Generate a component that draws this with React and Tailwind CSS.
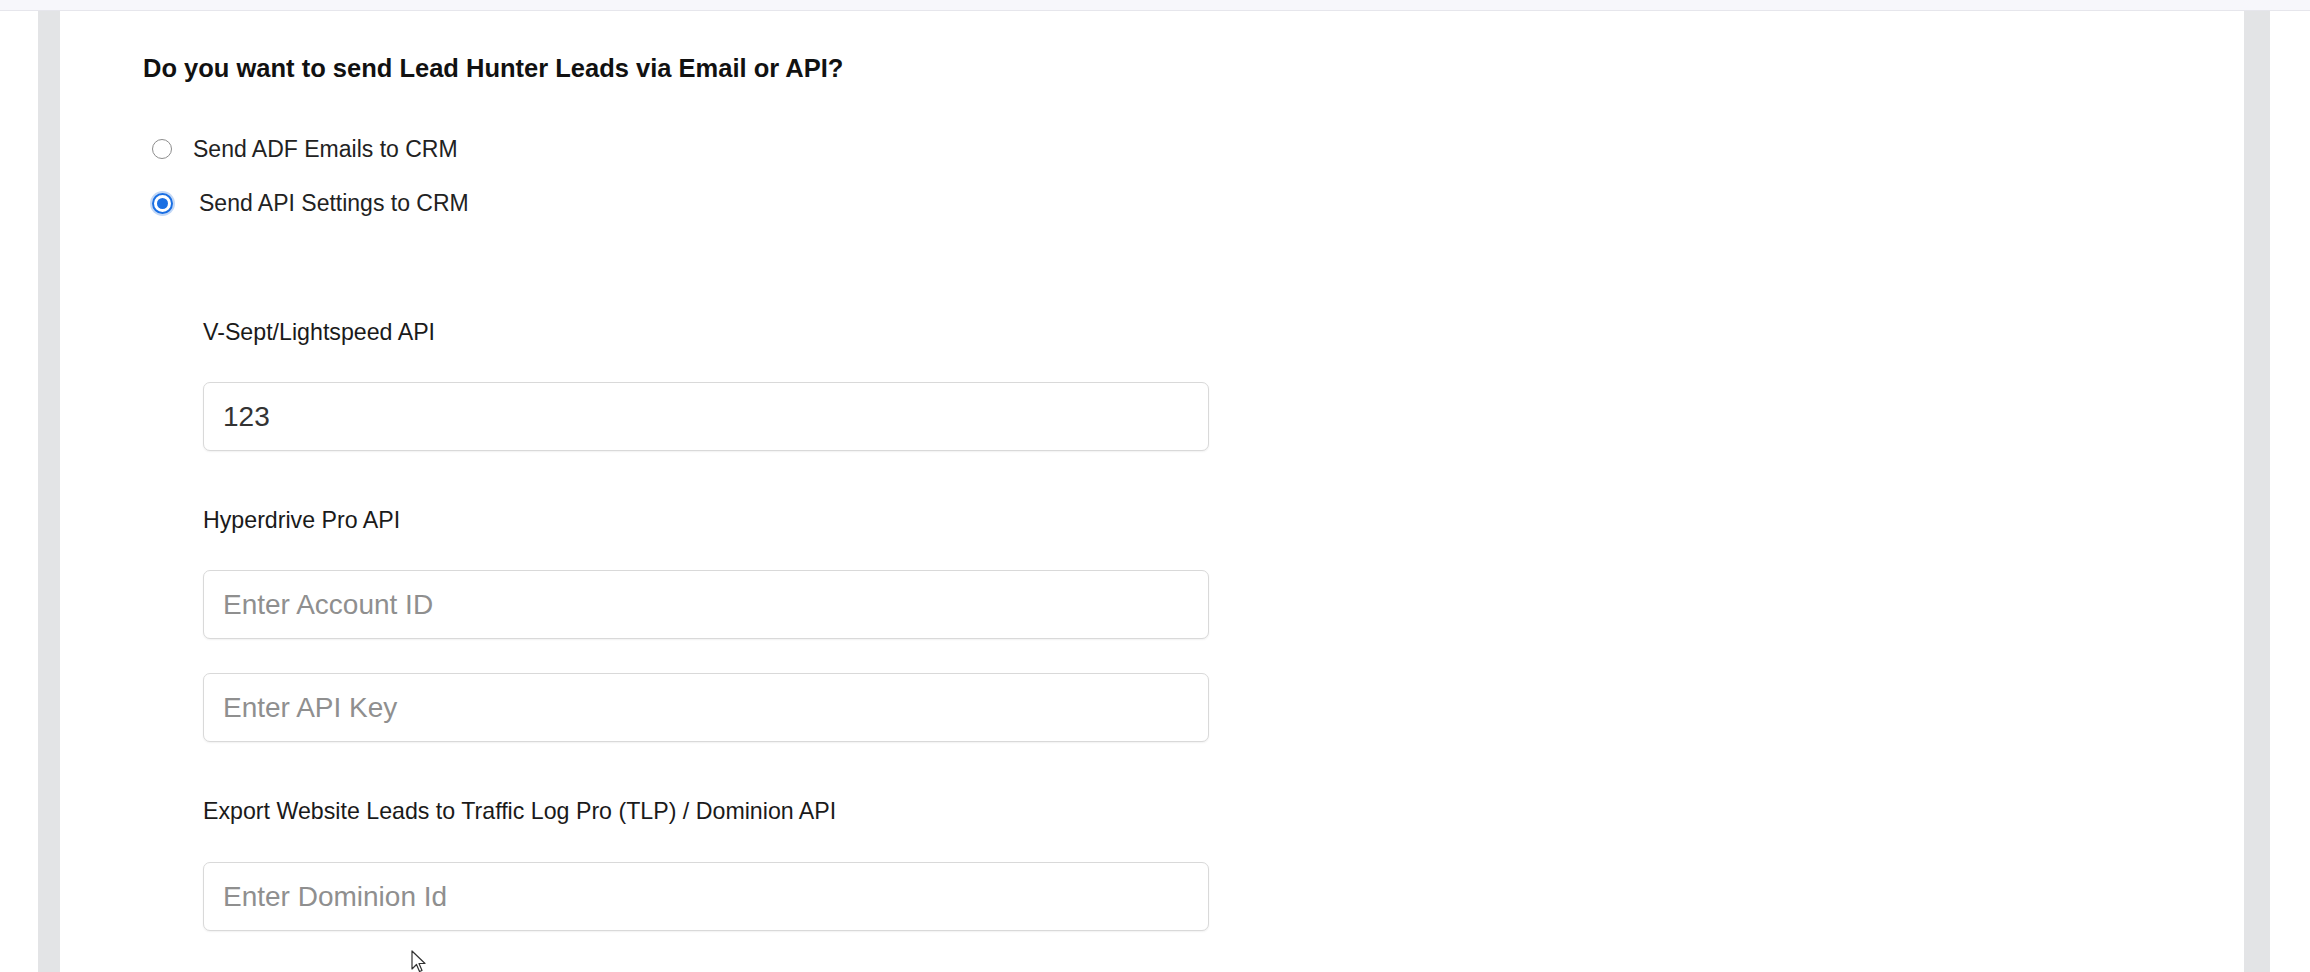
import { useState } from "react";

function Radio({ checked }) {
  if (checked) {
    return (
      <span className="flex h-[21px] w-[21px] items-center justify-center rounded-full border-[2px] border-[#1a6fe3] bg-white ring-[2px] ring-[#c3d8f6]">
        <span className="h-[11px] w-[11px] rounded-full bg-[#1a6fe3]" />
      </span>
    );
  }
  return <span className="h-[20px] w-[20px] rounded-full border-[1.5px] border-[#8d8d8d] bg-white" />;
}

function Field({ value, placeholder }) {
  return (
    <input
      defaultValue={value}
      placeholder={placeholder}
      className="h-[69px] w-[1006px] rounded-[7px] border border-[#d9d9d9] bg-white px-[19px] text-[28px] text-[#333] shadow-[0_1px_2px_rgba(0,0,0,0.06)] outline-none placeholder:text-[#8f8f8f]"
    />
  );
}

export default function App() {
  const [mode, setMode] = useState("api");

  return (
    <div className="flex h-[972px] w-full flex-col overflow-hidden bg-white font-['Liberation_Sans',Arial,sans-serif]">
      {/* top bar */}
      <div className="h-[11px] shrink-0 border-b border-[#e6e6ec] bg-[#f7f7fb]" />

      <div className="flex flex-1">
        <div className="w-[38px] shrink-0 bg-white" />
        <div className="w-[22px] shrink-0 bg-[#e3e4e6]" />

        {/* main panel */}
        <main className="relative flex-1 bg-white pl-[83px] pt-[43px]">
          <h2 className="text-[25.5px] font-bold leading-[28px] text-[#111]">
            Do you want to send Lead Hunter Leads via Email or API?
          </h2>

          <div className="mt-[56px] flex flex-col gap-[32px] pl-[9px]">
            <label className="flex items-center gap-[21px]" onClick={() => setMode("email")}>
              <Radio checked={mode === "email"} />
              <span className="text-[23px] leading-[22px] text-[#222]">Send ADF Emails to CRM</span>
            </label>
            <label className="flex items-center gap-[26px]" onClick={() => setMode("api")}>
              <Radio checked={mode === "api"} />
              <span className="text-[23px] leading-[22px] text-[#222]">Send API Settings to CRM</span>
            </label>
          </div>

          <div className="mt-[106px] flex flex-col pl-[60px]">
            <label className="text-[23.2px] leading-[24px] text-[#1a1a1a]">V-Sept/Lightspeed API</label>
            <div className="mt-[38px]">
              <Field value="123" />
            </div>

            <label className="mt-[57px] text-[23.2px] leading-[24px] text-[#1a1a1a]">Hyperdrive Pro API</label>
            <div className="mt-[38px] flex flex-col gap-[34px]">
              <Field placeholder="Enter Account ID" />
              <Field placeholder="Enter API Key" />
            </div>

            <label className="mt-[57px] text-[23.2px] leading-[24px] text-[#1a1a1a]">
              Export Website Leads to Traffic Log Pro (TLP) / Dominion API
            </label>
            <div className="mt-[39px]">
              <Field placeholder="Enter Dominion Id" />
            </div>
          </div>

          {/* mouse pointer */}
          <svg className="absolute left-[351px] top-[939px]" width="16" height="24" viewBox="0 0 16 24">
            <path d="M1 1 L1 19 L5.5 14.5 L8.5 21.5 L11 20.5 L8 13.5 L14 13.5 Z" fill="#fff" stroke="#333" strokeWidth="1.2" strokeLinejoin="round" />
          </svg>
        </main>

        <div className="w-[26px] shrink-0 bg-[#e3e4e6]" />
        <div className="w-[40px] shrink-0 bg-white" />
      </div>
    </div>
  );
}
